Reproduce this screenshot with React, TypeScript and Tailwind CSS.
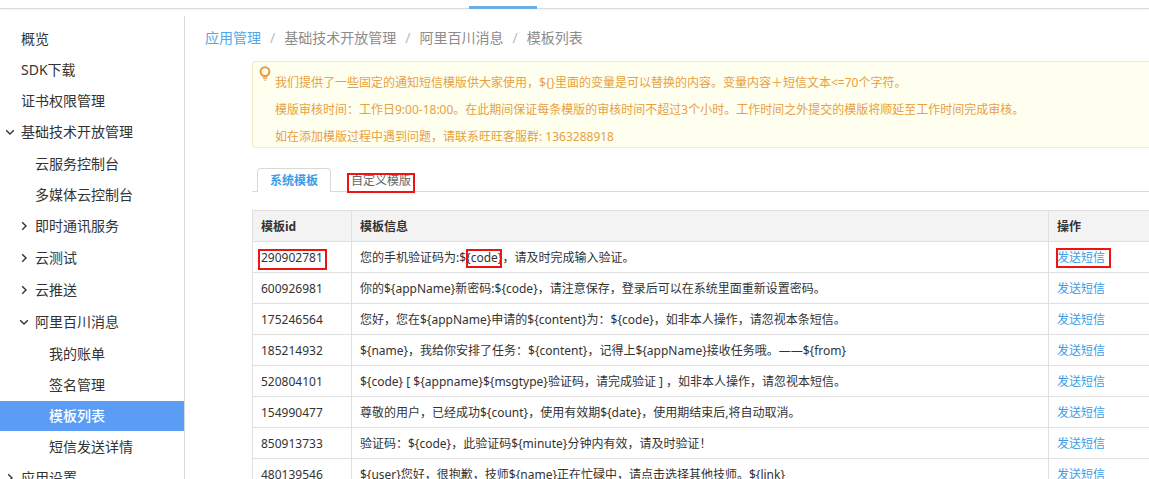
import type { ReactNode } from 'react';

type NavItem = {
  label: string;
  level: 0 | 1 | 2;
  state?: 'open' | 'closed';
  active?: boolean;
};

const navItems: NavItem[] = [
  { label: '概览', level: 0 },
  { label: 'SDK下载', level: 0 },
  { label: '证书权限管理', level: 0 },
  { label: '基础技术开放管理', level: 0, state: 'open' },
  { label: '云服务控制台', level: 1 },
  { label: '多媒体云控制台', level: 1 },
  { label: '即时通讯服务', level: 1, state: 'closed' },
  { label: '云测试', level: 1, state: 'closed' },
  { label: '云推送', level: 1, state: 'closed' },
  { label: '阿里百川消息', level: 1, state: 'open' },
  { label: '我的账单', level: 2 },
  { label: '签名管理', level: 2 },
  { label: '模板列表', level: 2, active: true },
  { label: '短信发送详情', level: 2 },
  { label: '应用设置', level: 0, state: 'closed' },
];

const indent = {
  0: 'pl-1',
  1: 'pl-[18px]',
  2: 'pl-8',
};

function Chevron({ open }: { open: boolean }) {
  return (
    <svg viewBox="0 0 12 12" className="size-3" fill="none" stroke="currentColor" strokeWidth="1.4" aria-hidden="true">
      <path d={open ? 'M2.2 4.2 6 8l3.8-3.8' : 'M4.2 2.2 8 6 4.2 9.8'} />
    </svg>
  );
}

function NavRow({ item }: { item: NavItem }) {
  const tone = item.active ? 'bg-[#5b9df5] text-white font-medium' : 'text-[#333]';
  const row = `flex w-full items-center gap-[5px] text-left ${indent[item.level]} ${tone}`;
  if (item.state) {
    return (
      <button type="button" aria-expanded={item.state === 'open'} className={`${row} h-[31px] pb-0.5`}>
        <Chevron open={item.state === 'open'} />
        {item.label}
      </button>
    );
  }
  return (
    <a href="#" aria-current={item.active ? 'page' : undefined} className={`${row} h-[30px]`}>
      <span className="w-3" />
      {item.label}
    </a>
  );
}

function Marked({ children, box }: { children: ReactNode; box: string }) {
  return (
    <span className="relative inline-block">
      {children}
      <span className={`pointer-events-none absolute border-2 border-[#ee1414] ${box}`} />
    </span>
  );
}

const rows: { id: string; info: ReactNode }[] = [
  {
    id: '290902781',
    info: (
      <>
        您的手机验证码为:$<Marked box="left-0 -right-1 -top-px -bottom-0.5">{'{code'}</Marked>
        {'}，请及时完成输入验证。'}
      </>
    ),
  },
  { id: '600926981', info: '你的${appName}新密码:${code}，请注意保存，登录后可以在系统里面重新设置密码。' },
  { id: '175246564', info: '您好，您在${appName}申请的${content}为：${code}，如非本人操作，请忽视本条短信。' },
  { id: '185214932', info: '${name}，我给你安排了任务：${content}，记得上${appName}接收任务哦。——${from}' },
  { id: '520804101', info: '${code} [ ${appname}${msgtype}验证码，请完成验证 ] ，如非本人操作，请忽视本短信。' },
  { id: '154990477', info: '尊敬的用户，已经成功${count}，使用有效期${date}，使用期结束后,将自动取消。' },
  { id: '850913733', info: '验证码：${code}，此验证码${minute}分钟内有效，请及时验证！' },
  { id: '480139546', info: '${user}您好，很抱歉，技师${name}正在忙碌中，请点击选择其他技师。${link}' },
];

const cell = 'h-[31px] border-l border-t border-[#e0e0e0] pl-2 pt-0.5 text-left whitespace-nowrap';

function Separator() {
  return <span className="px-[9px] text-[#bbb]">/</span>;
}

export default function App() {
  return (
    <div className="flex h-screen flex-col overflow-hidden bg-white font-['Noto_Sans','Noto_Sans_CJK_SC',sans-serif] text-sm text-[#333]">
      <header className="flex h-[9px] shrink-0 items-end border-b border-[#d9dcdd] shadow-xs">
        <div className="relative top-px ml-[469px] h-[3px] w-[68px] bg-[#6aaee2]" />
      </header>

      <div className="flex min-h-0 flex-1 pt-[7px]">
        <nav className="flex w-[185px] shrink-0 flex-col gap-px overflow-hidden border-r border-[#d3d9da] pt-2">
          {navItems.map((item) => (
            <div key={item.label} className="shrink-0">
              <NavRow item={item} />
            </div>
          ))}
        </nav>

        <main className="min-w-0 flex-1 overflow-hidden pl-5">
          <div className="flex h-[45px] items-center pb-0.5 text-[#8c8c8c]">
            <a href="#" className="text-[#4fa9e8]">应用管理</a>
            <Separator />
            <span>基础技术开放管理</span>
            <Separator />
            <span>阿里百川消息</span>
            <Separator />
            <span>模板列表</span>
          </div>

          <div className="pl-[47px] text-xs">
            <section className="flex rounded-l-sm border-y border-l border-[#f3ecc8] bg-[#fffff0] pl-1.5 text-[#e8a040]">
              <svg viewBox="0 0 12 16" className="mt-1 h-4 w-3 shrink-0" fill="none" stroke="#e99a3c" aria-hidden="true">
                <circle cx="6" cy="5.600" r="4.400" strokeWidth="2" />
                <path d="M4 10.800h4" strokeWidth="1.600" />
                <path d="M3.800 12.600h4.400M4.800 14.200h2.400" strokeWidth="1" opacity="0.8" />
              </svg>
              <div className="pl-1 pt-[7px] leading-[27px] whitespace-nowrap">
                <p>{'我们提供了一些固定的通知短信模版供大家使用，${}里面的变量是可以替换的内容。变量内容＋短信文本<=70个字符。'}</p>
                <p>模版审核时间：工作日9:00-18:00。在此期间保证每条模版的审核时间不超过3个小时。工作时间之外提交的模版将顺延至工作时间完成审核。</p>
                <p className="h-6">如在添加模版过程中遇到问题，请联系旺旺客服群: 1363288918</p>
              </div>
            </section>

            <div role="tablist" className="mt-5 flex h-6 items-end border-b border-[#d9d9d9] pl-[5px]">
              <button
                type="button"
                role="tab"
                aria-selected="true"
                className="-mb-px h-6 w-[74px] rounded-t-sm border border-b-0 border-[#d9d9d9] bg-white pt-px font-bold text-[#3d9be6]"
              >
                系统模板
              </button>
              <button type="button" role="tab" aria-selected="false" className="ml-5 h-6 pt-1 text-[#666]">
                <Marked box="-left-1 -right-1 top-0 -bottom-1">自定义模版</Marked>
              </button>
            </div>

            <table className="mt-[18px] w-full table-fixed border-separate border-spacing-0">
              <thead>
                <tr className="bg-[#f3f3f3] font-bold">
                  <th className={`${cell} w-[99px]`}>模板id</th>
                  <th className={cell}>模板信息</th>
                  <th className={`${cell} w-[101px]`}>操作</th>
                </tr>
              </thead>
              <tbody>
                {rows.map((row, i) => (
                  <tr key={row.id}>
                    <td className={cell}>
                      {i === 0 ? <Marked box="-left-[3px] -right-1 -top-px -bottom-1">{row.id}</Marked> : row.id}
                    </td>
                    <td className={cell}>{row.info}</td>
                    <td className={`${cell} text-[#3d9be6]`}>
                      <a href="#">
                        {i === 0 ? <Marked box="-left-px -right-1.5 -top-0.5 -bottom-0.5">发送短信</Marked> : '发送短信'}
                      </a>
                    </td>
                  </tr>
                ))}
              </tbody>
            </table>
          </div>
        </main>
      </div>
    </div>
  );
}
